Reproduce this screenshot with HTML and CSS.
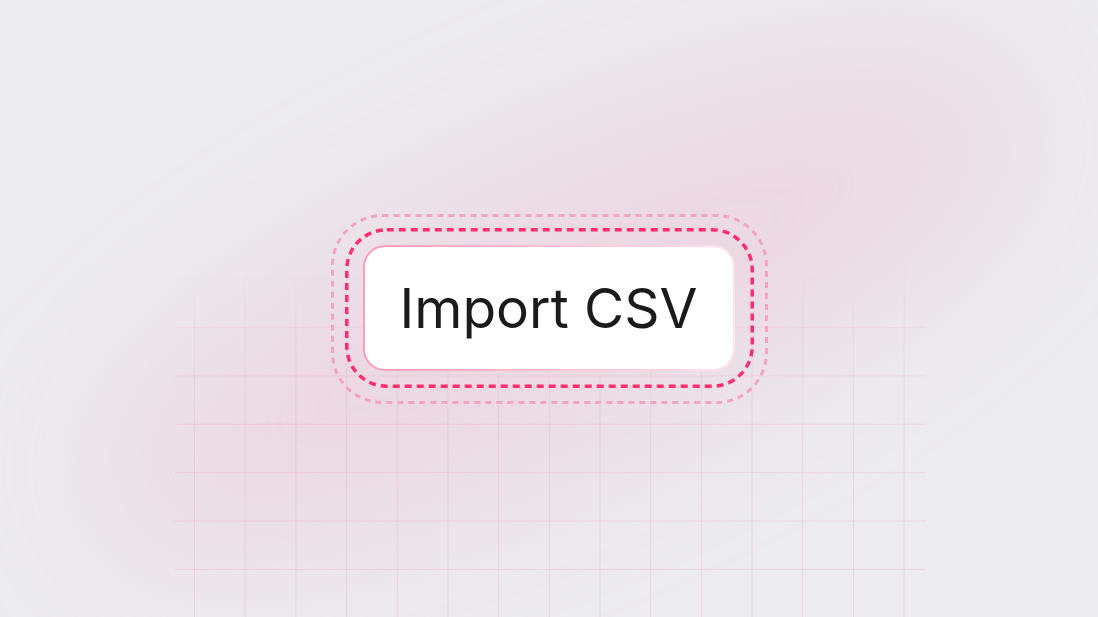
FILE: index.html
```html
<!DOCTYPE html>
<html lang="en">
<head>
<meta charset="utf-8">
<title>Import CSV</title>
<link rel="stylesheet" href="styles.css">
</head>
<body>
<main class="stage">
  <div class="glow"></div>
  <div class="grid"></div>
  <div class="focus">
    <svg class="rings" width="437" height="190" viewBox="0 0 437 190" aria-hidden="true">
      <rect class="ring-outer" x="1.5" y="1.5" width="434" height="187" rx="50" ry="50"/>
      <rect class="ring-inner" x="15.75" y="15.75" width="405.5" height="156.5" rx="40" ry="40"/>
    </svg>
    <button class="btn" type="button">Import CSV</button>
  </div>
</main>
</body>
</html>
```

FILE: styles.css
```css
html, body {
  margin: 0;
  height: 100%;
}
body {
  background: #ecebef;
  overflow: hidden;
  font-family: Inter, "Noto Sans", sans-serif;
}
.stage {
  position: relative;
  width: 100%;
  height: 100%;
  display: flex;
  align-items: center;
  justify-content: center;
  overflow: hidden;
}
.glow {
  position: absolute;
  left: 60px;
  top: 160px;
  width: 1000px;
  height: 290px;
  border-radius: 50%;
  background: rgba(236, 170, 196, 0.3);
  transform: rotate(-24deg);
  filter: blur(75px);
}
.grid {
  position: absolute;
  left: 175px;
  width: 750px;
  top: 0;
  bottom: 0;
  background-image:
    linear-gradient(to right, rgba(245, 120, 165, 0.2) 1px, transparent 1px),
    linear-gradient(to bottom, rgba(245, 120, 165, 0.2) 1px, transparent 1px);
  background-size: 50.7px 48.4px;
  background-position: 19px 327px;
  -webkit-mask-image: linear-gradient(to bottom, transparent 42%, rgba(0,0,0,0.5) 55%, #000 72%);
  mask-image: linear-gradient(to bottom, transparent 42%, rgba(0,0,0,0.5) 55%, #000 72%);
}
.focus {
  position: relative;
  width: 437px;
  height: 190px;
  display: flex;
  align-items: center;
  justify-content: center;
}
.rings {
  position: absolute;
  left: 0;
  top: 0;
}
.ring-outer {
  fill: none;
  stroke: #f2a6be;
  stroke-width: 3;
  stroke-dasharray: 6 5;
}
.ring-inner {
  fill: none;
  stroke: #ff2e6c;
  stroke-width: 3.5;
  stroke-dasharray: 7 5;
}
.btn {
  position: relative;
  width: 372px;
  height: 126px;
  margin-top: -2px;
  margin-left: -1px;
  border: 2px solid transparent;
  border-radius: 22px;
  background:
    linear-gradient(#ffffff, #ffffff) padding-box,
    linear-gradient(to right, #ff9db7, #ffe3e8) border-box;
  font-family: Inter, "Noto Sans", sans-serif;
  font-size: 55px;
  font-weight: 400;
  color: #1b1b1d;
  letter-spacing: 0;
  padding: 0;
  cursor: pointer;
}
```
